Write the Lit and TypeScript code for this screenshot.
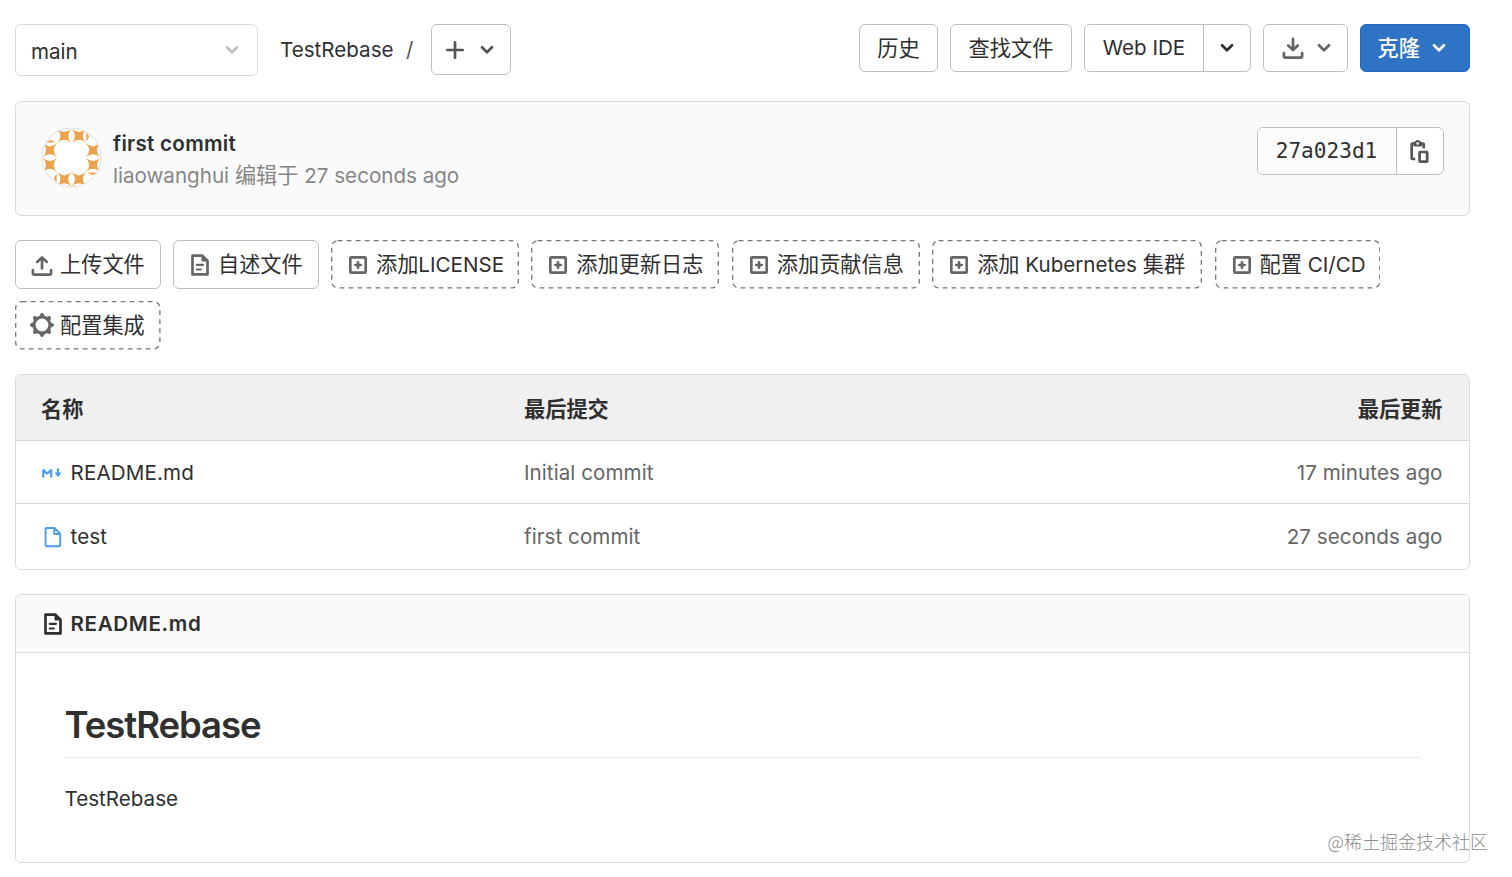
import { LitElement, html, css, svg } from "lit";
import { customElement } from "lit/decorators.js";

const chevron = (cls = "") => html`<svg class="chev ${cls}" width="14" height="10" viewBox="0 0 14 10">
  <path d="M2 2.3 7 7.3 12 2.3" fill="none" stroke="currentColor" stroke-width="2.7" stroke-linecap="round" stroke-linejoin="round" />
</svg>`;

const icon = (body: unknown) => html`<svg class="icon" width="24" height="24" viewBox="0 0 24 24" fill="none"
  stroke="currentColor" stroke-width="2.7" stroke-linecap="round" stroke-linejoin="round">${body}</svg>`;

const tray = svg`<path d="M2.9 17v3.2a1.4 1.4 0 0 0 1.4 1.4h15.4a1.4 1.4 0 0 0 1.4-1.4V17" />`;
const uploadIcon = icon(svg`${tray}<path d="M12 15.500V4.900M7.200 8.900 12 4.400l4.800 4.500" />`);
const downloadIcon = icon(svg`${tray}<path d="M12 2.800V13.500M7.200 9.500 12 14l4.800-4.500" />`);
const docIcon = icon(svg`<path d="M4.500 2.600h9.800l5.200 5.200v13.600h-15z" /><path d="M14 2.600v5.400h5.400z" fill="currentColor" stroke-width="1" />
  <path d="M8.800 11.800h6.200M8.800 16.500h4" stroke-width="2.200" />`);
const plusIcon = icon(svg`<rect x="4.300" y="4.300" width="15.400" height="15.400" rx="1" /><path d="M12 9.300v5.400M9.300 12h5.400" />`);
const gearIcon = icon(svg`<circle cx="12" cy="12" r="7.900" stroke-width="3" />
  ${[0, 45, 90, 135, 180, 225, 270, 315].map(
    (a) => svg`<path d="M10.200 3.200 11.500 1h1l1.300 2.200z" transform="rotate(${a} 12 12)" fill="currentColor" stroke-width="1.800" />`
  )}`);
const clipIcon = icon(svg`<path d="M8.300 20H5.500a.8.800 0 0 1-.8-.8V5.300a.8.800 0 0 1 .8-.8h10.400a.8.800 0 0 1 .8.800v3.900" stroke-linecap="butt" />
  <path d="M7.300 6.800V3.800L9.200 2.800a1.700 1.700 0 0 1 3 0l1.900 1v3z" fill="currentColor" stroke-width="1.600" />
  <circle cx="10.700" cy="4.500" r="1.300" fill="#fff" stroke="none" />
  <rect x="12.600" y="13" width="7.600" height="9.600" rx=".5" />`);
const crossIcon = html`<svg class="cross" width="20" height="20" viewBox="0 0 20 20" fill="none" stroke="currentColor" stroke-width="2.700" stroke-linecap="round">
  <path d="M10 2.300v15.400M2.300 10h15.400" /></svg>`;
const mdIcon = html`<svg class="md" width="20" height="10" viewBox="0 0 20 10" fill="none" stroke="currentColor" stroke-width="2.200">
  <path d="M1.300 9.500V1.800L5.200 5.800 9.200 1.800V9.500" stroke-linejoin="bevel" />
  <path d="M16 .5V5" /><path d="M12.400 4.600h7.200L16 9.300z" fill="currentColor" stroke="none" /></svg>`;
const fileIcon = html`<svg class="file" width="20" height="22" viewBox="0 0 20 22" fill="none" stroke="currentColor" stroke-width="1.900" stroke-linejoin="round">
  <path d="M3.500 2h8l5.700 5.700v11.600a.9.900 0 0 1-.9.900H3.500a.9.900 0 0 1-.9-.9V2.900a.9.900 0 0 1 .9-.9zM11.200 2v6h5.900" /></svg>`;

const star = (x: number, y: number) =>
  svg`<path transform="translate(${x} ${y})" d="M-7.200-7.200Q0-.6 7.200-7.200 .6 0 7.200 7.200 0 .6-7.200 7.200-.6 0-7.200-7.200z" />`;
const avatar = html`<svg class="avatar" width="61" height="61" viewBox="0 0 61 61">
  <defs><clipPath id="disc"><circle cx="30.500" cy="30.500" r="29.500" /></clipPath></defs>
  <circle cx="30.500" cy="30.500" r="29.500" fill="#fff" />
  <g clip-path="url(#disc)" fill="#eda24e">
    ${[[23.300, 8.900], [37.900, 8.900], [8.900, 23.300], [52.100, 23.300], [8.900, 37.900], [52.100, 37.900], [23.300, 52.300], [37.900, 52.300]].map(([x, y]) => star(x, y))}
    ${[0, 90, 180, 270].map((a) => svg`<path transform="rotate(${a} 30.500 30.500)" d="M5 15.600 9.500 12.800 14.500 15.600z" />`)}
  </g>
  <circle cx="30.500" cy="30.500" r="29.500" fill="none" stroke="#dedede" />
</svg>`;

const dashed = html`<svg class="dash"><rect x=".7" y=".7" rx="6" /></svg>`;

const actions = [
  { icon: uploadIcon, label: "上传文件", w: "w146", dash: false },
  { icon: docIcon, label: "自述文件", w: "w146", dash: false },
  { icon: plusIcon, label: "添加LICENSE", w: "w188", dash: true },
  { icon: plusIcon, label: "添加更新日志", w: "w188", dash: true },
  { icon: plusIcon, label: "添加贡献信息", w: "w188", dash: true },
  { icon: plusIcon, label: "添加 Kubernetes 集群", w: "w270", dash: true },
  { icon: plusIcon, label: "配置 CI/CD", w: "w166", dash: true },
  { icon: gearIcon, label: "配置集成", w: "w146", dash: true },
];

const files = [
  { icon: mdIcon, name: "README.md", commit: "Initial commit", time: "17 minutes ago" },
  { icon: fileIcon, name: "test", commit: "first commit", time: "27 seconds ago" },
];

// Chinese runs are set slightly larger than the Latin ones beside them.
const mixed = (text: string) =>
  text.split(/([\u4e00-\u9fff]+)/).map((part) => (/[\u4e00-\u9fff]/.test(part) ? html`<span class="han">${part}</span>` : part));

@customElement("app-root")
export class AppRoot extends LitElement {
  static styles = css`
    :host {
      display: block;
      position: relative;
      box-sizing: border-box;
      width: 1512px;
      height: 877px;
      overflow: hidden;
      padding: 24px 42.500px 0 15px;
      background: #fff;
      color: #303030;
      font: 400 20.600px/32px Inter, "Noto Sans CJK SC", sans-serif;
      white-space: nowrap;
    }
    * { box-sizing: border-box; }
    svg { display: block; flex: none; }
    .han { font-size: 21.200px; line-height: 1; }
    .top { display: flex; align-items: flex-start; height: 77px; }
    .box { display: flex; align-items: center; border: 1px solid #bfbfbf; border-radius: 6px; background: #fff; height: 48px; }
    .select { width: 243px; height: 52px; border-color: #dbdbdb; justify-content: space-between; padding: 0 18px 0 15px; }
    .select span { padding-top: 3px; }
    .chev.pale { color: #bfbfbf; }
    .crumb { display: flex; gap: 12.500px; margin-left: 22px; height: 51px; align-items: center; }
    .slash { color: #555; }
    .add { width: 80px; height: 51px; margin-left: 18px; padding: 0 16px 0 13px; justify-content: space-between; color: #555; }
    .right { margin-left: auto; display: flex; gap: 12px; }
    .txt { justify-content: center; padding-top: 1px; }
    .hist { width: 79px; }
    .find { width: 122px; }
    .ide { width: 167px; }
    .ide-label { width: 118px; text-align: center; }
    .cell { display: flex; align-items: center; justify-content: center; align-self: stretch; border-left: 1px solid #bfbfbf; flex: 1; }
    .down { width: 85px; padding: 0 16px 0 17px; justify-content: space-between; color: #666; }
    .clone { width: 109.500px; background: #2f73c5; border-color: #2368ba; color: #fff; padding: 0 22.500px 0 16.500px; justify-content: space-between; font-weight: 500; }
    .clone span { padding-top: .5px; }
    .commit { display: flex; align-items: flex-start; height: 115px; border: 1px solid #dbdbdb; border-radius: 6px; background: #fafafa; padding: 25px 25px 0; }
    .avatar { margin-top: -.5px; }
    .msg { margin: 1px 0 0 11px; }
    .title { font-weight: 600; letter-spacing: .270px; }
    .sub { color: #868686; }
    .sha { margin-left: auto; width: 187px; overflow: hidden; }
    .mono { width: 138px; text-align: center; font: 21.100px/46px "DejaVu Sans Mono", monospace; background: #fcfcfc; }
    .copy { color: #555; }
    .copy svg { margin-left: -1px; }
    .actions { display: flex; flex-wrap: wrap; gap: 12.200px 12.400px; padding-top: 24.400px; height: 158px; align-content: flex-start; }
    .act { position: relative; padding-left: 14px; gap: 6px; height: 48.500px; }
    .act span { padding-top: .5px; }
    .act .han { padding-top: 0; }
    .act .icon { color: #666; }
    .act.dashed { border-color: transparent; }
    .dash { position: absolute; left: -1px; top: -1px; width: calc(100% + 2px); height: calc(100% + 2px); }
    .dash rect { width: calc(100% - 1.400px); height: calc(100% - 1.400px); fill: none; stroke: #777; stroke-width: 1.300; stroke-dasharray: 4.800 4.200; }
    .w146 { width: 145.600px; }
    .w188 { width: 188px; }
    .w270 { width: 270px; }
    .w166 { width: 165.500px; }
    .panel { border: 1px solid #dbdbdb; border-radius: 6px; overflow: hidden; }
    .row { display: grid; grid-template-columns: 483px 1fr auto; align-items: center; height: 64px; padding: 2px 26px 0 25px; color: #666; border-top: 1px solid #dbdbdb; letter-spacing: .060px; }
    .row:nth-child(2) { height: 63px; }
    .row:last-child { height: 66px; padding-bottom: 1px; }
    .row.head { height: 65px; padding-top: 4px; background: #f0f0f0; color: #303030; font-weight: 600; border-top: 0; letter-spacing: 0; }
    .name { display: flex; align-items: center; color: #303030; letter-spacing: .130px; }
    .md, .file { color: #4a9fe6; }
    .md { margin: 0 8.500px 0 1px; }
    .file { margin: 0 7.500px 0 2px; }
    .readme { margin-top: 24px; height: 269px; }
    .rhead { display: flex; align-items: center; gap: 5.500px; height: 58px; padding: 1px 0 0 25px; background: #fafafa; border-bottom: 1px solid #dbdbdb; font-weight: 600; letter-spacing: .650px; }
    .body { padding: 49px 49px 0; }
    h1 { margin: 0; font-size: 36.500px; line-height: 47px; font-weight: 600; height: 56px; border-bottom: 1px solid #e8e8e8; letter-spacing: -1.050px; }
    p { margin: 25px 0 0; }
    .body h1, .body p { text-indent: -.5px; }
    .mark { position: absolute; right: 24px; bottom: 22px; font-size: 18px; line-height: 28px; font-weight: 300; color: #8c8c8c; font-family: "Noto Sans CJK SC", sans-serif; }
  `;

  render() {
    return html`
      <div class="top">
        <div class="box select"><span>main</span>${chevron("pale")}</div>
        <div class="crumb"><span class="repo">TestRebase</span><span class="slash">/</span></div>
        <div class="box add">${crossIcon}${chevron()}</div>
        <div class="right">
          <div class="box txt hist">${mixed("历史")}</div>
          <div class="box txt find">${mixed("查找文件")}</div>
          <div class="box ide"><span class="ide-label">Web IDE</span><span class="cell">${chevron()}</span></div>
          <div class="box down">${downloadIcon}${chevron()}</div>
          <div class="box clone"><span>${mixed("克隆")}</span>${chevron()}</div>
        </div>
      </div>
      <div class="commit">
        ${avatar}
        <div class="msg">
          <div class="title">first commit</div>
          <div class="sub">${mixed("liaowanghui 编辑于 27 seconds ago")}</div>
        </div>
        <div class="box sha"><span class="mono">27a023d1</span><span class="cell copy">${clipIcon}</span></div>
      </div>
      <div class="actions">
        ${actions.map(
          (a) => html`<div class="box act ${a.w} ${a.dash ? "dashed" : ""}">${a.dash ? dashed : ""}${a.icon}<span>${mixed(a.label)}</span></div>`
        )}
      </div>
      <div class="panel">
        <div class="row head"><span>${mixed("名称")}</span><span>${mixed("最后提交")}</span><span>${mixed("最后更新")}</span></div>
        ${files.map(
          (f) => html`<div class="row"><span class="name">${f.icon}${f.name}</span><span>${f.commit}</span><span>${f.time}</span></div>`
        )}
      </div>
      <div class="panel readme">
        <div class="rhead">${docIcon}<span>README.md</span></div>
        <div class="body">
          <h1>TestRebase</h1>
          <p>TestRebase</p>
        </div>
      </div>
      <div class="mark">@稀土掘金技术社区</div>
    `;
  }
}
